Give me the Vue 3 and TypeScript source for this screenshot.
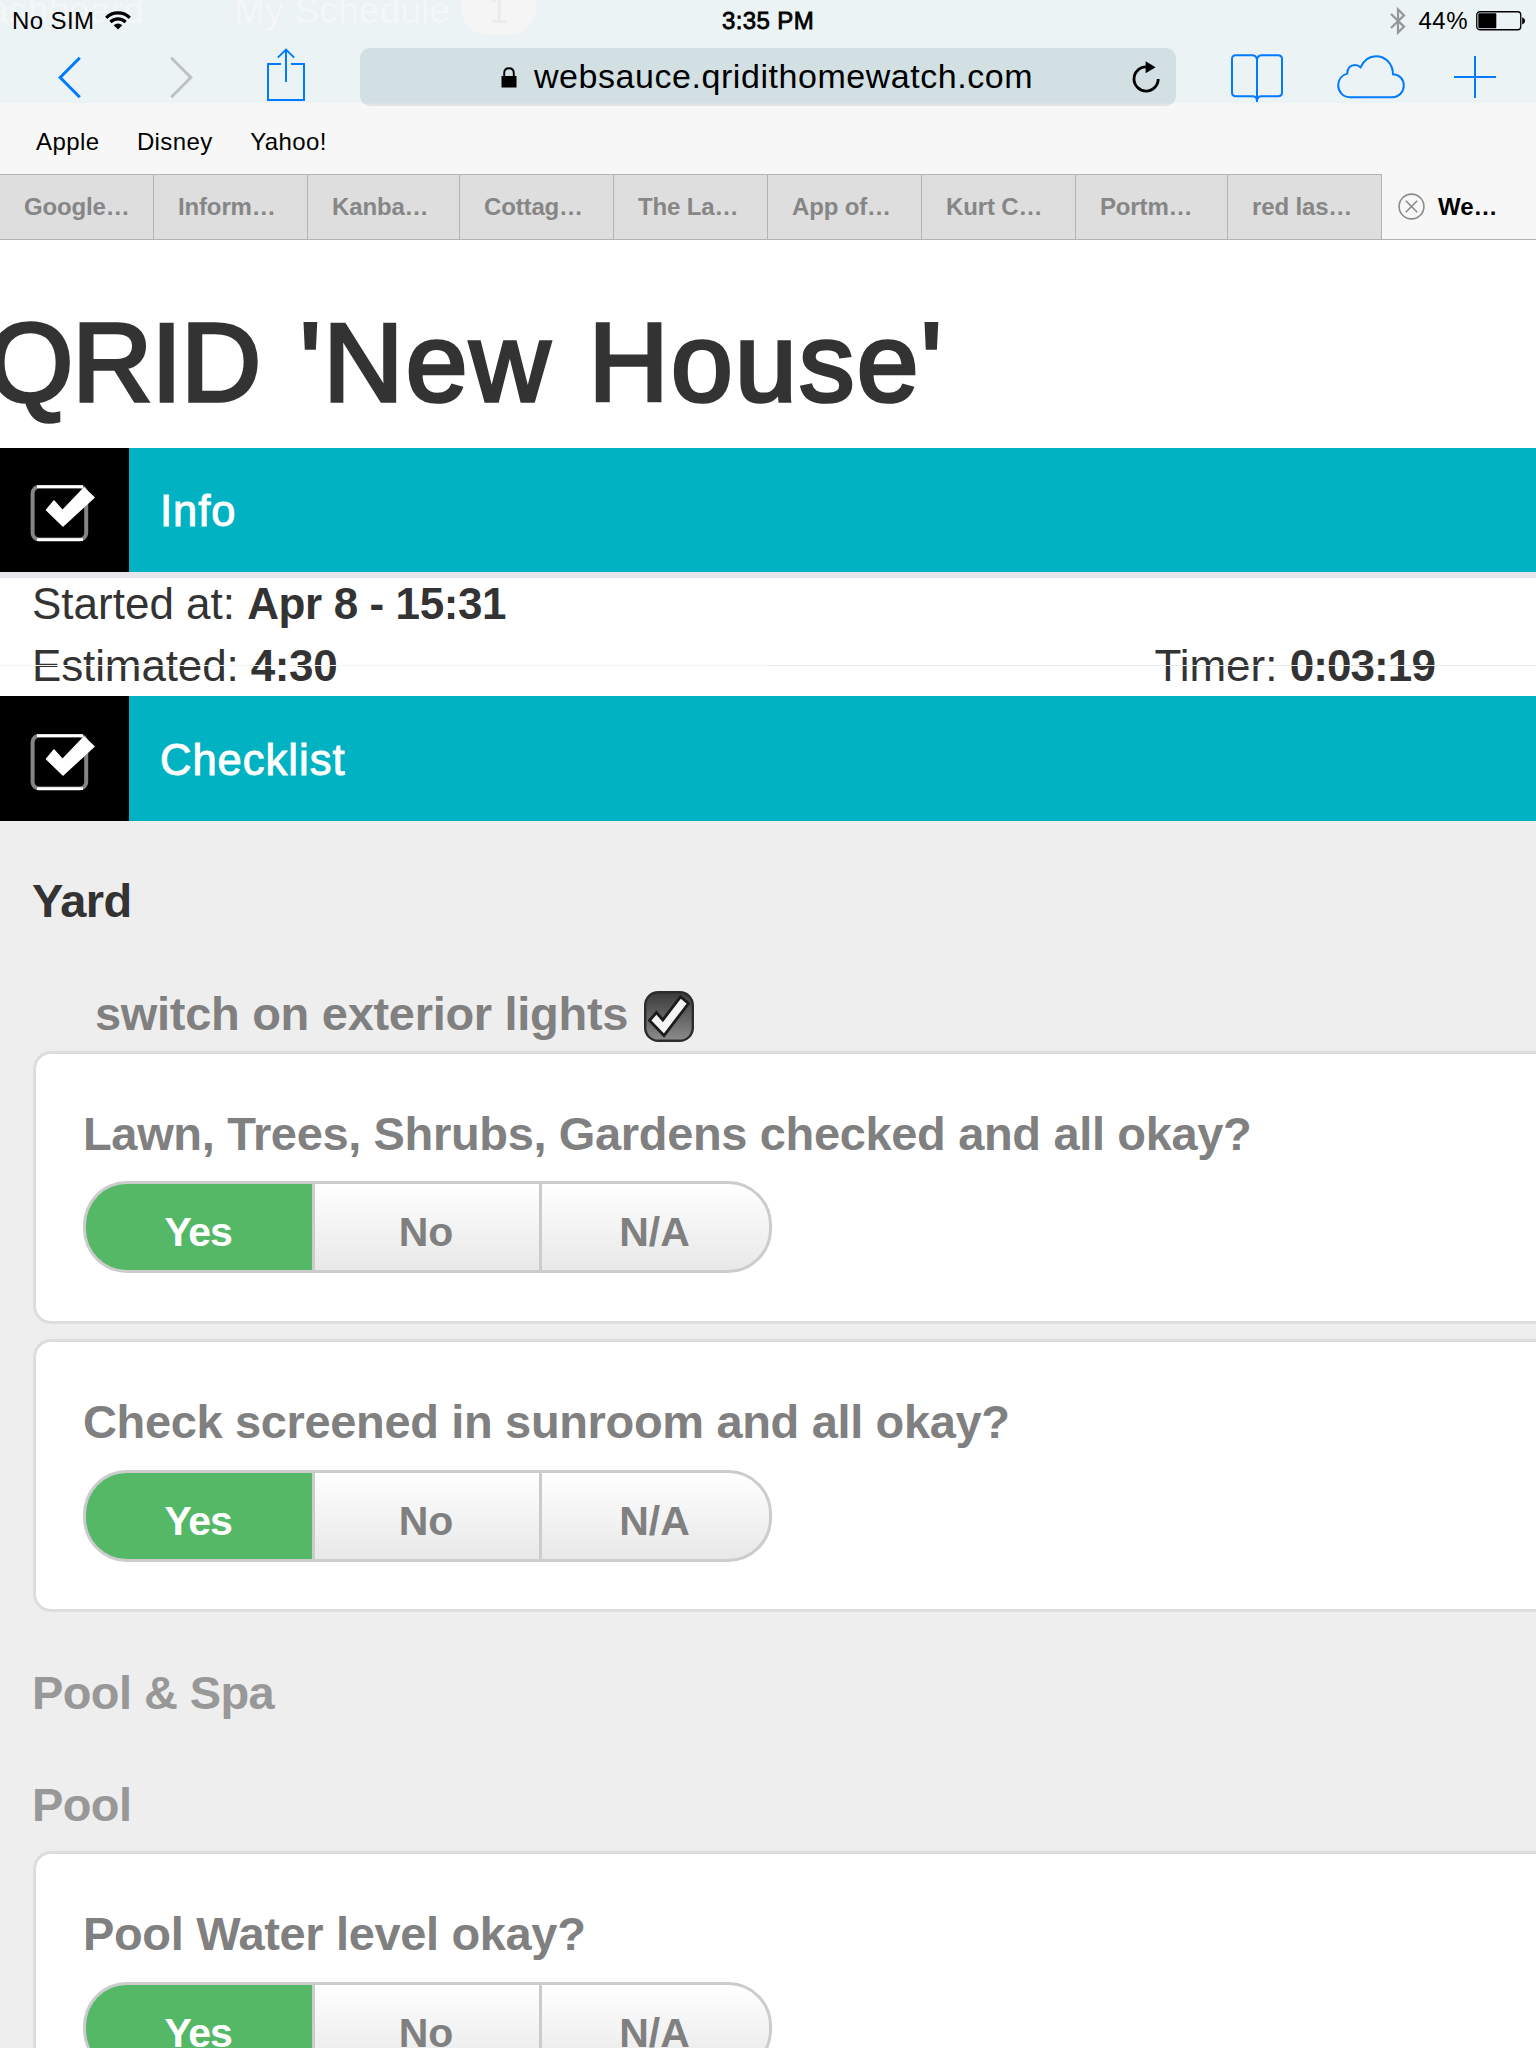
<script setup lang="ts">
interface Tab {
  title: string
  width: number
}

interface Question {
  id: number
  label: string
}

const bookmarks: string[] = ['Apple', 'Disney', 'Yahoo!']

const tabs: Tab[] = [
  { title: 'Google…', width: 154 },
  { title: 'Inform…', width: 154 },
  { title: 'Kanba…', width: 152 },
  { title: 'Cottag…', width: 154 },
  { title: 'The La…', width: 154 },
  { title: 'App of…', width: 154 },
  { title: 'Kurt C…', width: 154 },
  { title: 'Portm…', width: 152 },
  { title: 'red las…', width: 154 },
]

const answers: string[] = ['Yes', 'No', 'N/A']

const yardQuestions: Question[] = [
  { id: 1, label: 'Lawn, Trees, Shrubs, Gardens checked and all okay?' },
  { id: 2, label: 'Check screened in sunroom and all okay?' },
]

const poolQuestions: Question[] = [{ id: 3, label: 'Pool Water level okay?' }]
</script>

<template>
  <div class="screen">
    <header class="chrome">
      <div class="underlay">
        <span class="ghost ghost-dash">Dashboard</span>
        <span class="ghost ghost-schedule">My Schedule</span>
        <span class="ghost-badge">1</span>
        <i class="ghost-line line-a"></i>
        <i class="ghost-line line-b"></i>
      </div>

      <div class="status">
        <div class="status-left">
          <span class="carrier">No SIM</span>
          <svg class="wifi" width="26" height="19" viewBox="0 0 26 19">
            <path d="M1.2 6.8 A16.6 16.6 0 0 1 24.8 6.8" fill="none" stroke="#000" stroke-width="3.2" />
            <path d="M5.4 11 A10.8 10.8 0 0 1 20.6 11" fill="none" stroke="#000" stroke-width="3.2" />
            <path d="M8.7 14.2 A6.1 6.1 0 0 1 17.3 14.2 L13 18.6 Z" fill="#000" />
          </svg>
        </div>
        <div class="clock">3:35 PM</div>
        <div class="status-right">
          <svg class="bluetooth" width="16" height="28" viewBox="0 0 16 28">
            <path d="M1 7 L14 19.6 L8 25.6 V2.4 L14 8.4 L1 21" fill="none" stroke="#929798" stroke-width="2.2" />
          </svg>
          <span class="percent">44%</span>
          <svg class="battery" width="50" height="20" viewBox="0 0 50 20">
            <rect x="0.75" y="0.75" width="44" height="18" rx="3" fill="none" stroke="#000" stroke-width="1.3" />
            <rect x="2.3" y="2.3" width="18" height="15" rx="1" fill="#000" />
            <path d="M46.2 6.2 C48 7 49 8 49 9.8 C49 11.6 48 12.6 46.2 13.4 Z" fill="#000" />
          </svg>
        </div>
      </div>

      <div class="toolbar">
        <svg class="back" width="24" height="43" viewBox="0 0 24 43">
          <path d="M21.8 1.8 L2.2 21.5 L21.8 41.2" fill="none" stroke="#007aff" stroke-width="3" />
        </svg>
        <svg class="forward" width="24" height="43" viewBox="0 0 24 43">
          <path d="M2.2 1.8 L21.8 21.5 L2.2 41.2" fill="none" stroke="#bdc3c4" stroke-width="3" />
        </svg>
        <svg class="share" width="38" height="54" viewBox="0 0 38 54">
          <path d="M14 16 H1 V52 H37 V16 H24" fill="none" stroke="#007aff" stroke-width="2" />
          <path d="M19 34 V2 M10.8 9.6 L19 1.6 L27.2 9.6" fill="none" stroke="#007aff" stroke-width="2" />
        </svg>
        <div class="address">
          <svg class="lock" width="16" height="21" viewBox="0 0 16 21">
            <rect x="0.5" y="9" width="15" height="11.5" fill="#000" />
            <path d="M3.2 10 V6.2 C3.2 3 5 1.2 8 1.2 C11 1.2 12.8 3 12.8 6.2 V10" fill="none" stroke="#000" stroke-width="1.9" />
          </svg>
          <span class="url">websauce.qridithomewatch.com</span>
          <svg class="reload" width="28" height="32" viewBox="0 0 28 32">
            <path d="M26.2 18 A12.1 12.1 0 1 1 14 5.9" fill="none" stroke="#000" stroke-width="2.8" />
            <path d="M13.6 0.2 L23.6 6.2 L13.6 12.2 Z" fill="#000" />
          </svg>
        </div>
        <svg class="book" width="52" height="49" viewBox="0 0 52 49">
          <path
            d="M26 5.5 C25.6 3 24 1.2 21 1.2 H5 C2.2 1.2 1 2.4 1 5 V38.5 C1 41.2 2.2 42.2 5 42.2 H21.5 C24.5 42.2 25.7 43.4 26 46.5 C26.3 43.4 27.5 42.2 30.5 42.2 H47 C49.8 42.2 51 41.2 51 38.5 V5 C51 2.4 49.8 1.2 47 1.2 H31 C28 1.2 26.4 3 26 5.5 Z M26 4 V48"
            fill="none" stroke="#007aff" stroke-width="2" />
        </svg>
        <svg class="cloud" width="68" height="44" viewBox="0 0 68 44">
          <path
            d="M12.6 42.2 C6 42.2 1.2 36.8 1.2 30.3 C1.2 24.4 5 20 10.2 18.6 C10 13.6 13.4 9.9 17.8 9.9 C20.2 9.9 22 10.6 23.6 12.3 C26.6 5.6 32 1.2 39 1.2 C48.4 1.2 55.8 8.6 56 19.2 C62 19.4 66.8 24 66.8 30.6 C66.8 37 62 42.2 55.4 42.2 Z"
            fill="none" stroke="#007aff" stroke-width="2" />
        </svg>
        <svg class="plus" width="42" height="42" viewBox="0 0 42 42">
          <path d="M21 0 V42 M0 21 H42" fill="none" stroke="#007aff" stroke-width="2" />
        </svg>
      </div>

      <nav class="bookmarks">
        <a v-for="b in bookmarks" :key="b" class="bookmark">{{ b }}</a>
      </nav>

      <nav class="tabs">
        <div v-for="t in tabs" :key="t.title" class="tab" :style="{ width: t.width + 'px' }">{{ t.title }}</div>
        <div class="tab-active">
          <svg width="27" height="27" viewBox="0 0 27 27">
            <circle cx="13.5" cy="13.5" r="12.4" fill="none" stroke="#8b8b8b" stroke-width="1.6" />
            <path d="M7.8 7.8 L19.2 19.2 M19.2 7.8 L7.8 19.2" stroke="#8b8b8b" stroke-width="1.6" />
          </svg>
          <span>We…</span>
        </div>
      </nav>
    </header>

    <main>
      <h1 class="title"><span class="brand">QRID </span><span class="place">'New House'</span></h1>

      <div class="bar">
        <div class="bar-icon">
          <svg width="66" height="58" viewBox="0 0 66 58">
            <rect x="2.6" y="1.8" width="53.6" height="52.8" rx="6.5" fill="none" stroke="#858585" stroke-width="4" />
            <path d="M7 1.6 H53 M7 54.6 H53" stroke="#fff" stroke-width="2.8" />
            <path d="M16.5 25 L24 16 L32.5 25.5 L54 3 L64 12.5 L33 41 Z" fill="#fff" stroke="#fff" stroke-width="1.4" stroke-linejoin="round" />
          </svg>
        </div>
        <span class="bar-text">Info</span>
      </div>

      <section class="details">
        <div class="row">
          <span>Started at: <b>Apr 8 - 15:31</b></span>
        </div>
        <div class="row second">
          <span class="estimated">Estimated: <b>4:30</b></span>
          <span class="timer">Timer: <b>0:03:19</b></span>
          <i class="rule"></i>
        </div>
      </section>

      <div class="bar lower">
        <div class="bar-icon">
          <svg width="66" height="58" viewBox="0 0 66 58">
            <rect x="2.6" y="1.8" width="53.6" height="52.8" rx="6.5" fill="none" stroke="#858585" stroke-width="4" />
            <path d="M7 1.6 H53 M7 54.6 H53" stroke="#fff" stroke-width="2.8" />
            <path d="M16.5 25 L24 16 L32.5 25.5 L54 3 L64 12.5 L33 41 Z" fill="#fff" stroke="#fff" stroke-width="1.4" stroke-linejoin="round" />
          </svg>
        </div>
        <span class="bar-text">Checklist</span>
      </div>

      <section class="checklist">
        <h2 class="group dark">Yard</h2>
        <label class="toggle">
          <span>switch on exterior lights</span>
          <svg width="50" height="51" viewBox="0 0 50 51">
            <defs>
              <linearGradient id="boxFill" x1="0" y1="0" x2="0" y2="1">
                <stop offset="0" stop-color="#3a3a3a" />
                <stop offset="1" stop-color="#8c8c8c" />
              </linearGradient>
            </defs>
            <rect x="1.2" y="1.2" width="47.6" height="48.6" rx="13" fill="url(#boxFill)" stroke="#2c2c2c" stroke-width="2.4" />
            <path d="M5.5 29.5 L12.5 21.5 L18.8 29 L36.5 5.8 L44.5 12.5 L20 44.5 Z" fill="#f4f4f4" stroke="#1c1c1c" stroke-width="2.8" />
          </svg>
        </label>

        <div class="cards">
          <article v-for="q in yardQuestions" :key="q.id" class="card">
            <p class="question">{{ q.label }}</p>
            <div class="segments">
              <button v-for="(a, i) in answers" :key="a" class="segment" :class="['s' + i, { chosen: i === 0 }]">{{ a }}</button>
            </div>
          </article>
        </div>

        <h2 class="group">Pool &amp; Spa</h2>
        <h2 class="group sub">Pool</h2>

        <div class="cards">
          <article v-for="q in poolQuestions" :key="q.id" class="card">
            <p class="question">{{ q.label }}</p>
            <div class="segments">
              <button v-for="(a, i) in answers" :key="a" class="segment" :class="['s' + i, { chosen: i === 0 }]">{{ a }}</button>
            </div>
          </article>
        </div>
      </section>
    </main>
  </div>
</template>

<style>
body {
  margin: 0;
  overflow: hidden;
}
</style>

<style scoped>
.screen {
  width: 1536px;
  height: 2048px;
  overflow: hidden;
  background: #fff;
  font-family: "Liberation Sans", Arial, sans-serif;
  color: #333;
}
svg {
  display: block;
  flex: none;
}
.chrome {
  position: relative;
  height: 240px;
  background: linear-gradient(#ebf3f5 103px, #f1f5f6 103px, #f7f7f7 104px);
  color: #000;
}
.underlay {
  position: absolute;
  inset: 0;
  overflow: hidden;
}
.ghost {
  position: absolute;
  top: -11px;
  font-size: 37px;
  line-height: 44px;
  letter-spacing: 0.25px;
  color: #f5f6f7;
  white-space: nowrap;
}
.ghost-dash { left: -39px; }
.ghost-schedule { left: 234px; }
.ghost-badge {
  position: absolute;
  left: 461px;
  top: -19px;
  width: 75px;
  height: 54px;
  border-radius: 27px;
  background: #f5f5f6;
  color: #ebebec;
  font: 34px/61px "DejaVu Sans", sans-serif;
  text-align: center;
}
.ghost-line {
  position: absolute;
  top: 0;
  width: 3px;
  height: 103px;
  background: #edf3f4;
}
.line-a { left: 190px; }
.line-b { left: 583px; }

.status {
  position: relative;
  display: grid;
  grid-template-columns: 1fr auto 1fr;
  height: 40px;
  font-size: 24px;
  line-height: 41px;
}
.status-left {
  display: flex;
  padding-left: 12px;
}
.carrier { letter-spacing: 0.4px; }
.wifi { margin: 11px 0 0 11px; }
.clock {
  -webkit-text-stroke: 0.8px #000;
  letter-spacing: 0.4px;
}
.status-right {
  display: flex;
  justify-content: flex-end;
  padding-right: 10px;
}
.bluetooth { margin: 7px 12px 0 0; }
.percent { letter-spacing: 0.5px; }
.battery { margin: 11px 0 0 8px; }

.toolbar {
  position: relative;
  display: flex;
  height: 70px;
  align-items: flex-start;
}
.back { margin: 16px 0 0 58px; }
.forward { margin: 16px 0 0 87px; }
.share { margin: 8px 0 0 74px; }
.address {
  display: flex;
  width: 816px;
  height: 58px;
  margin: 8px 0 0 55px;
  border-radius: 10px;
  background: linear-gradient(#d2dfe3 55px, #e2e5e6 56px);
  font-size: 34px;
  line-height: 56px;
}
.lock { margin: 19px 0 0 141px; }
.url {
  margin-left: 17px;
  width: 501px;
  letter-spacing: 0.55px;
}
.reload { margin: 13px 0 0 97px; }
.book { margin: 14px 0 0 55px; }
.cloud { margin: 15px 0 0 54px; }
.plus { margin: 16px 0 0 49px; }

.bookmarks {
  position: relative;
  display: flex;
  gap: 37.5px;
  height: 64px;
  padding-left: 36px;
  font-size: 24px;
  line-height: 63px;
  letter-spacing: 0.4px;
}
.tabs {
  position: relative;
  display: flex;
  height: 65px;
  border-bottom: 1px solid #b2b3b3;
  font-size: 24px;
  font-weight: bold;
  line-height: 65px;
}
.tab {
  box-sizing: border-box;
  height: 65px;
  padding-left: 24px;
  line-height: 64px;
  border-top: 1px solid #b2b3b3;
  border-right: 1px solid #b2b3b3;
  background: #dedede;
  color: #868686;
  letter-spacing: -0.15px;
  white-space: nowrap;
}
.tab-active {
  display: flex;
  align-items: center;
  gap: 13px;
  padding-left: 16px;
}

.title {
  box-sizing: border-box;
  height: 208px;
  margin: 0 0 0 -13px;
  padding-top: 38px;
  font-size: 111px;
  line-height: 170px;
  font-weight: normal;
  white-space: nowrap;
  -webkit-text-stroke: 3.6px #333;
}
.brand {
  letter-spacing: -1.1px;
  word-spacing: 10px;
}
.place {
  letter-spacing: 2.3px;
  word-spacing: 3px;
}
.bar {
  display: flex;
  height: 124px;
  background: #00b2c2;
  color: #fff;
}
.bar.lower { height: 124.5px; }
.bar-icon {
  width: 129px;
  background: #000;
}
.bar-icon svg { margin: 37px 0 0 30px; }
.lower .bar-icon svg { margin-top: 38px; }
.bar-text {
  margin-left: 31px;
  font-size: 43.5px;
  line-height: 127px;
  letter-spacing: 1px;
  -webkit-text-stroke: 1px #fff;
}
.lower .bar-text { line-height: 128px; }
.details {
  box-sizing: border-box;
  height: 124px;
  border-top: 6px solid #e4e6ec;
  font-size: 44px;
  line-height: 52px;
}
.details b { letter-spacing: -0.4px; }
.row {
  display: flex;
  height: 52px;
  padding-left: 32px;
  justify-content: space-between;
}
.row.second {
  position: relative;
  margin-top: 9.5px;
  padding-right: 101px;
}
.timer b { letter-spacing: -0.9px; }
.estimated { letter-spacing: -0.12px; }
.rule {
  position: absolute;
  left: 0;
  top: 25px;
  width: 1536px;
  height: 1px;
  background: linear-gradient(90deg, #f3f3f3 768px, #e8e8e8 768px);
}

.checklist { background: #eee; }
.group {
  height: 161px;
  margin: 0;
  padding-left: 32px;
  font-size: 47px;
  line-height: 161px;
  letter-spacing: -0.6px;
  color: #989898;
}
.group.dark {
  height: 160px;
  line-height: 160px;
  color: #333;
}
.group.sub {
  height: 78px;
  line-height: 63px;
}
.toggle {
  display: flex;
  height: 70px;
  padding-left: 95px;
  font-size: 47px;
  line-height: 65px;
  font-weight: bold;
  letter-spacing: -0.3px;
  color: #808080;
}
.toggle svg { margin: 10px 0 0 16px; }
.cards {
  display: flex;
  flex-direction: column;
  gap: 15.6px;
  padding-left: 33px;
}
.card {
  box-sizing: border-box;
  height: 273px;
  padding: 33px 0 0 47px;
  border: 3px solid #ddd;
  border-right: 0;
  border-radius: 18px 0 0 18px;
  background: #fff;
}
.question {
  margin: 0;
  height: 94.5px;
  font-size: 47px;
  line-height: 94.5px;
  font-weight: bold;
  letter-spacing: -0.35px;
  color: #808080;
  white-space: nowrap;
}
.segments {
  display: flex;
  width: 689px;
  height: 92px;
}
.segment {
  box-sizing: border-box;
  width: 227px;
  height: 92px;
  margin: 0;
  padding: 11px 2px 0 0;
  border: 3px solid #ccc;
  border-right-width: 0;
  background: linear-gradient(#fff, #e8e8e8);
  color: #808080;
  font: bold 41px "Liberation Sans", Arial, sans-serif;
}
.segment.s0 {
  width: 229px;
  border-radius: 44px 0 0 44px;
  letter-spacing: -1.2px;
}
.segment.s2 {
  width: 233px;
  border-right-width: 3px;
  border-radius: 0 44px 44px 0;
}
.segment.chosen {
  background: #55b867;
  color: #fff;
}
</style>
